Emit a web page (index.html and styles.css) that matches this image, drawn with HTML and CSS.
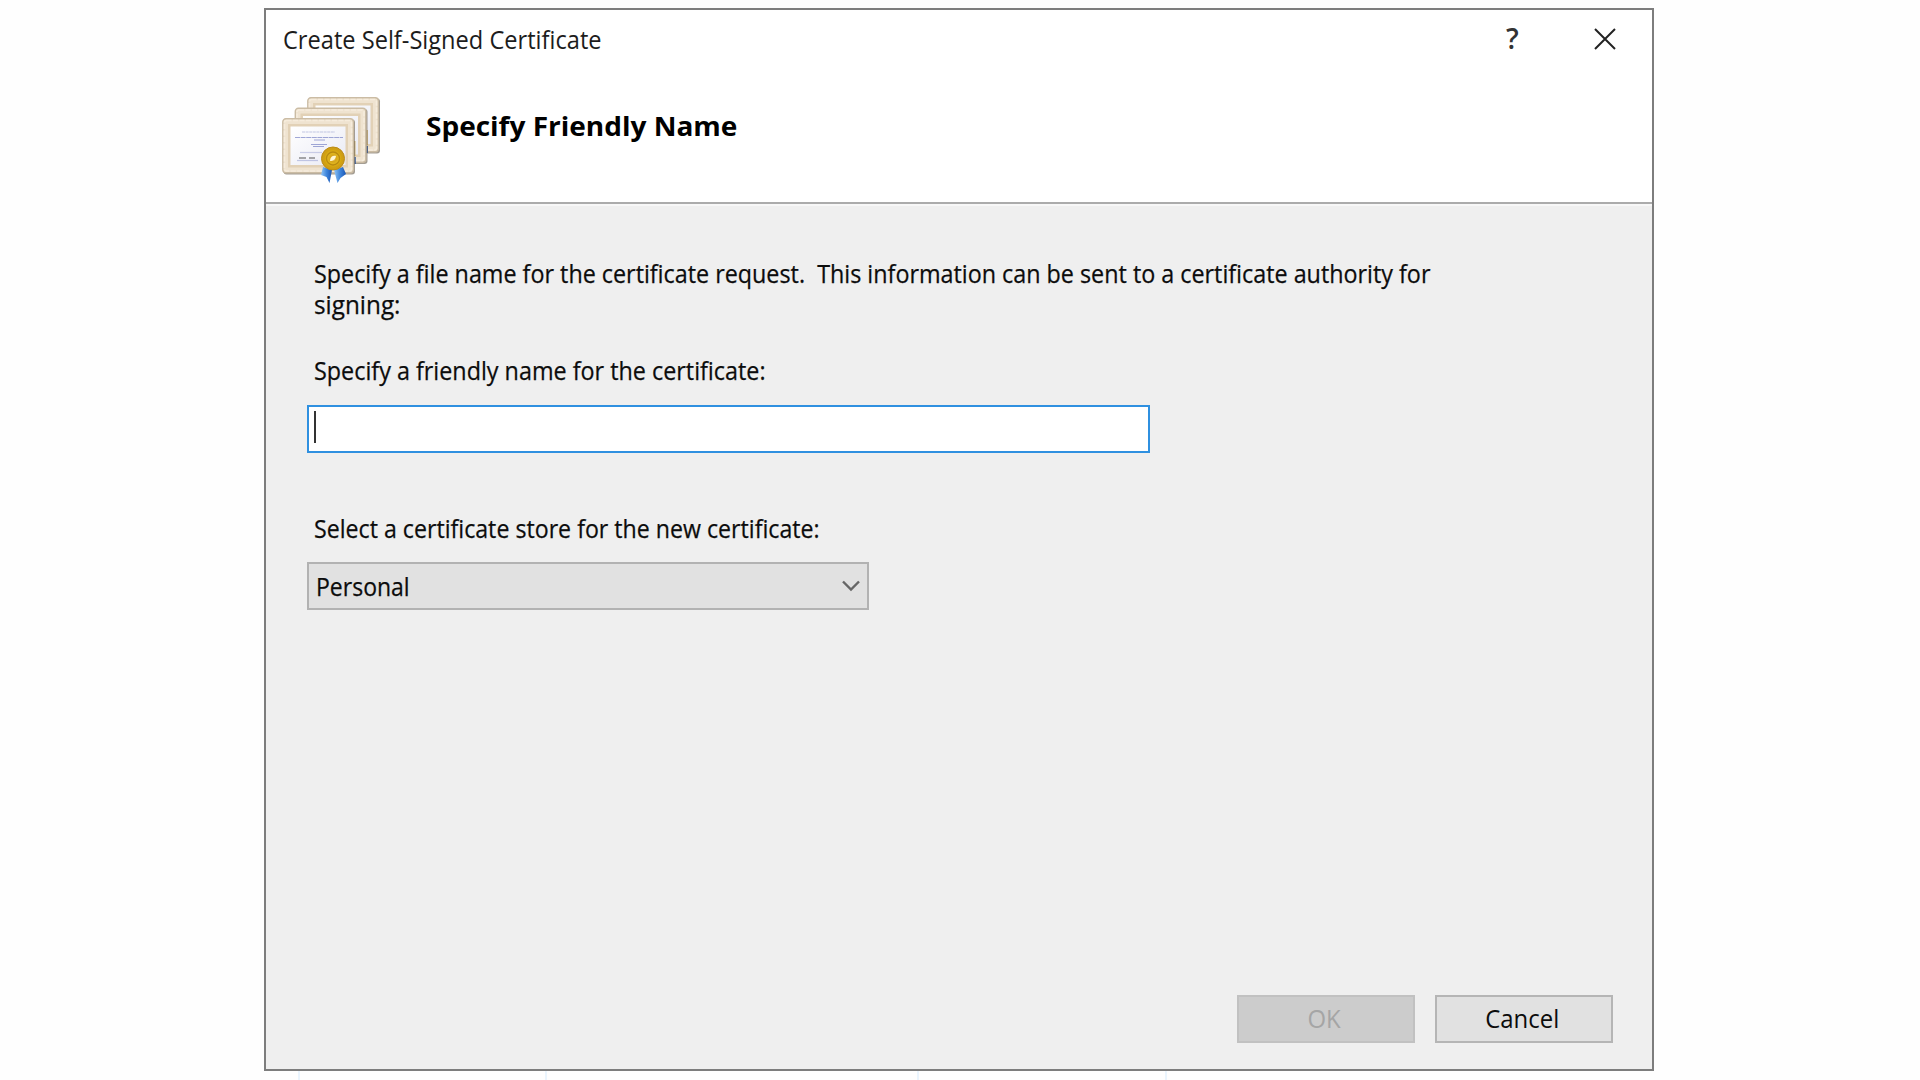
FILE: index.html
```
<!DOCTYPE html>
<html lang="en">
<head>
<meta charset="utf-8">
<title>Create Self-Signed Certificate</title>
<link rel="stylesheet" href="styles.css">
</head>
<body>
<main class="dialog">
  <header class="titlebar">
    <span class="title">Create Self-Signed Certificate</span>
    <span class="help">?</span>
    <svg class="close" viewBox="0 0 22 22"><path d="M1 1 21 21M21 1 1 21"/></svg>
  </header>
  <section class="banner">
    <svg class="certs" viewBox="0 0 100 88">
      <defs>
        <linearGradient id="paper" x1="0" y1="0" x2="1" y2="1"><stop offset="0" stop-color="#fff"/><stop offset="1" stop-color="#e9eaf4"/></linearGradient>
        <radialGradient id="gold"><stop offset="0" stop-color="#fff3c0"/><stop offset=".25" stop-color="#d6a51c"/><stop offset=".5" stop-color="#e2b81f"/><stop offset=".75" stop-color="#d3a20e"/><stop offset="1" stop-color="#c99a1c"/></radialGradient>
        <linearGradient id="ribbon"><stop offset="0" stop-color="#8fc3f5"/><stop offset=".5" stop-color="#3f86dc"/><stop offset="1" stop-color="#1b55b4"/></linearGradient>
        <g id="frame">
          <rect x="1.500" y="1.500" width="71.500" height="55" rx="3" fill="#8f8678" opacity=".8"/>
          <rect x=".8" y=".8" width="70.500" height="54" rx="3" fill="#efe3d0" stroke="#cbbca4" stroke-width="1.400"/>
          <rect x="2.500" y="2.500" width="67" height="50.500" rx="2" fill="none" stroke="#f6ecdc" stroke-width="1.600" stroke-dasharray="5 1.500"/>
          <rect x="6" y="6" width="60" height="43.500" fill="#e2d1b6"/>
          <rect x="8.500" y="8.500" width="55" height="38.500" fill="url(#paper)"/>
        </g>
      </defs>
      <use href="#frame" x="25" y="1"/>
      <path d="M84.500 34v15" stroke="#b98c24" stroke-width="2.200"/><path d="M84.500 50v7" stroke="#244c91" stroke-width="3"/>
      <use href="#frame" x="12.500" y="11.500"/>
      <path d="M72.200 45v15" stroke="#b98c24" stroke-width="2.200"/><path d="M72.200 61v7" stroke="#244c91" stroke-width="3"/>
      <use href="#frame" x="0" y="22"/>
      <g fill="none" stroke="#6571bd" stroke-width="1.200" opacity=".6">
        <path d="M20 36h33" stroke-dasharray="3 .6" opacity=".6"/>
        <path d="M13 41.500h48" stroke-dasharray="5 .6"/>
        <path d="M32 44h11M29 48.500h16M31 50.500h11"/>
        <path d="M18 56.500h22" opacity=".5"/><path d="M17 62h7M27 62h6" stroke="#444" stroke-width="1.400"/><path d="M15 64.500h21" opacity=".6"/>
      </g>
      <path d="M41 71 50 74 47.500 87 44.500 81 39 79Z" fill="url(#ribbon)"/>
      <path d="M52 74 61 71 64 78 58.500 82 55.500 87Z" fill="url(#ribbon)"/>
      <circle cx="51" cy="62.500" r="11.500" fill="url(#gold)" stroke="#bd8c14"/>
      <circle cx="51" cy="62.500" r="6.500" fill="none" stroke="#b98a10" stroke-width="1.400"/>
      <path d="M48 65c0-4 3-6 6-5-.5 3.500-3 5-6 5Z" fill="#fff6d5"/>
    </svg>
    <h1 class="heading">Specify Friendly Name</h1>
  </section>
  <section class="content">
    <p class="text intro">Specify a file name for the certificate request.&nbsp; This information can be sent to a certificate authority for</p>
    <p class="text intro-end">signing:</p>
    <p class="text name-label">Specify a friendly name for the certificate:</p>
    <div class="input"><span class="caret"></span></div>
    <p class="text store-label">Select a certificate store for the new certificate:</p>
    <div class="select"><span class="value">Personal</span><svg class="chevron" viewBox="0 0 18 12"><path d="M1 1.500 9 9.500 17 1.500"/></svg></div>
    <footer class="actions">
      <span class="button disabled"><span class="caption">OK</span></span>
      <span class="button"><span class="caption">Cancel</span></span>
    </footer>
  </section>
</main>
<div class="columns"><i></i><i></i><i></i><i></i></div>
</body>
</html>
```
FILE: styles.css
```
* { box-sizing: border-box; }
html, body { height: 100%; }
body {
  margin: 0;
  padding-top: 8px;
  overflow: hidden;
  background: #fefefe;
  color: #0c0c0c;
  font-family: "Open Sans", "Noto Sans", sans-serif;
  font-size: 26px;
  line-height: 31px;
}
.dialog {
  display: flex;
  flex-direction: column;
  width: 1390px;
  height: 1063px;
  margin-left: 264px;
  border: 2px solid #7d7d7d;
  background: #fff;
}
.titlebar {
  display: flex;
  align-items: flex-start;
  height: 85px;
  padding: 14px 36px 0 17px;
}
.title { transform: scaleX(.908); transform-origin: left; color: #1c1c1c; white-space: nowrap; }
.help { width: 12px; margin: -1px 76px 0 auto; font-size: 28px; font-weight: 600; text-align: center; color: #333; }
.close { width: 22px; height: 22px; margin-top: 4px; }
.close path { fill: none; stroke: #222; stroke-width: 2; }
.banner {
  display: flex;
  height: 109px;
  padding-left: 16px;
  border-bottom: 2px solid #ababab;
}
.certs { width: 100px; height: 88px; margin-top: 1px; }
.heading { margin: 12px 0 0 44px; font-size: 27px; font-weight: 700; line-height: 38px; color: #000; white-space: nowrap; transform: scaleX(1.037); transform-origin: left; }
.content {
  flex: 1;
  display: flex;
  flex-direction: column;
  padding: 52px 39px 26px 41px;
  border-top: 2px solid #f7f7f7;
  background: #efefef;
}
.text { align-self: flex-start; margin: 0 0 0 7px; transform-origin: left; white-space: nowrap; }
.text, .value { -webkit-text-stroke: .25px; }
.intro { transform: scaleX(.897); }
.intro-end { margin-bottom: 35px; transform: scaleX(.935); }
.name-label { transform: scaleX(.898); }
.store-label { transform: scaleX(.891); }
.input {
  width: 843px;
  height: 48px;
  margin: 19px 0 60px;
  padding: 4px 5px;
  border: 2px solid #2f90e0;
  background: #fff;
}
.caret { display: block; width: 2px; height: 32px; background: #333; }
.select {
  display: flex;
  align-items: center;
  justify-content: space-between;
  width: 562px;
  height: 48px;
  margin-top: 18px;
  padding: 0 7px 0 7px;
  border: 2px solid #b2b2b2;
  background: #e1e1e1;
}
.value { transform: scaleX(.885); transform-origin: left; }
.chevron { width: 18px; height: 12px; }
.chevron path { fill: none; stroke: #666; stroke-width: 2.4; }
.actions { display: flex; justify-content: flex-end; gap: 20px; margin-top: auto; }
.button {
  display: flex;
  align-items: center;
  justify-content: center;
  width: 178px;
  height: 48px;
  padding: 0 4px 1px 0;
  border: 2px solid #b5b5b5;
  background: #e1e1e1;
}
.caption { transform: scaleX(.92); }
.disabled { border-color: #c1c1c1; background: #cccccc; color: #a5a5a5; }
.columns { display: flex; gap: 246px; height: 9px; padding-left: 298px; }
.columns i { width: 2px; background: #eaf4fd; }
.columns i:nth-child(2) { margin-left: -1px; }
.columns i:nth-child(3) { margin-left: 124px; }
```
